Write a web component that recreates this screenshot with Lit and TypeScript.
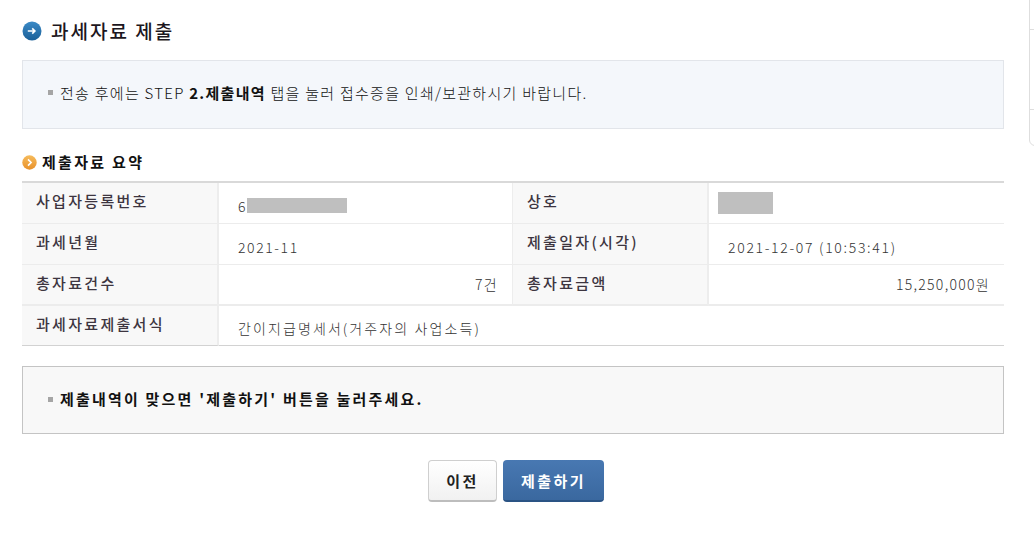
import { LitElement, html, css } from "lit";
import { customElement } from "lit/decorators.js";

@customElement("app-root")
export class AppRoot extends LitElement {
  static styles = css`
    :host {
      display: block;
      position: relative;
      width: 1034px;
      height: 539px;
      overflow: hidden;
      background: #fff;
      font-family: "Noto Sans CJK KR", "Noto Sans", sans-serif;
      color: #333;
      font-size: 15px;
    }
    .page { display: flex; flex-direction: column; padding: 0 30px 0 22px; }
    .title { display: flex; align-items: center; gap: 9px; height: 60px; padding-top: 1px; box-sizing: border-box; }
    .title h1 { margin: 0; font-size: 19px; font-weight: 500; color: #1c1620; letter-spacing: 2px; line-height: 24px; }
    .title svg, .sub svg { flex: none; }
    .box {
      display: flex; align-items: center; gap: 7px;
      box-sizing: border-box; padding: 0 25px;
      letter-spacing: 1.28px; line-height: 20px; color: #111;
    }
    .box .dot { width: 5px; height: 5px; background: #a5a5a5; flex: none; }
    .info { height: 69px; padding-bottom: 4px; background: #f4f7fb; border: 1px solid #e2e5ea; font-weight: 300; }
    .info b, .note { font-weight: 700; color: #111; }
    .note { height: 68px; margin-top: 20px; padding-bottom: 2px; background: #f8f8f8; border: 1px solid #c4c4c4; letter-spacing: 2.2px; }
    .sub { display: flex; align-items: center; gap: 5px; height: 52px; padding-top: 14px; box-sizing: border-box; }
    .sub h2 { margin: 0; font-size: 15px; font-weight: 700; color: #111; letter-spacing: 2.3px; line-height: 20px; }
    .table {
      display: grid;
      grid-template-columns: 197px 293px 197px 295px;
      grid-template-rows: 41px 41px 41px 40px;
      border-top: 2px solid #d9d9d9;
    }
    .cell { box-sizing: border-box; display: flex; align-items: center; border-bottom: 1px solid #ececec; }
    .th {
      background: #f8f8f8; border-right: 2px solid #ededed;
      padding: 0 0 5px 14px; font-weight: 500; color: #3d3540; letter-spacing: 2.3px;
    }
    .th.second { padding-left: 14px; border-left: 1px solid #ededed; }
    .td { padding: 5px 0 0 19px; color: #333; font-size: 14px; font-weight: 300; letter-spacing: 1.6px; }
    .td.date { padding-left: 19px; letter-spacing: 1.7px; }
    .td.form { letter-spacing: 2.1px; }
    .td.num { justify-content: flex-end; padding: 0 14px 2px 0; letter-spacing: 1.3px; }
    .row3 { border-bottom: 2px solid #ececec; }
    .last { border-bottom: 1px solid #d2d2d2; }
    .wide { grid-column: span 3; }
    .mask { display: inline-block; background: #bfbfbf; }
    .m1 { width: 100px; height: 15px; margin: -1px 0 0 0; }
    .m2 { width: 55px; height: 22px; }
    .td.logo { padding: 0 0 0 9px; }
    .actions { display: flex; justify-content: center; gap: 6px; margin-top: 26px; padding-left: 6px; }
    button {
      box-sizing: border-box; height: 42px; border-radius: 4px; padding: 0;
      font: 700 15px "Noto Sans CJK KR", "Noto Sans", sans-serif; letter-spacing: 2.5px;
    }
    .prev {
      width: 69px; background: linear-gradient(#fff, #f1f1f1); color: #222;
      border: 1px solid #cfcfcf; border-bottom: 2px solid #bdbdbd;
    }
    .go {
      width: 101px; background: linear-gradient(#4878b2, #3a689f); color: #fff;
      border: 0; border-bottom: 2px solid #2a5384;
    }
    .side {
      position: absolute; left: 1029px; top: -10px; width: 20px; height: 156px;
      box-sizing: border-box; border: 1px solid #dedede; border-radius: 6px;
    }
    .side i { display: block; position: absolute; left: 0; right: 0; height: 1px; background: #dedede; }
    .side .a { top: 38px; }
    .side .b { top: 118px; }
  `;

  render() {
    return html`
      <div class="page">
        <div class="title">
          <svg width="20" height="20" viewBox="0 0 20 20">
            <defs><linearGradient id="bl" x1="0" y1="0" x2="0" y2="1"><stop offset="0" stop-color="#3b8ac6"/><stop offset="1" stop-color="#1a5f98"/></linearGradient></defs>
            <circle cx="10" cy="10" r="9.5" fill="url(#bl)"/>
            <path d="M5.8 10h7M10.2 7.4 12.9 10l-2.7 2.6" fill="none" stroke="#fff" stroke-width="1.6"/>
          </svg>
          <h1>과세자료 제출</h1>
        </div>
        <div class="box info">
          <span class="dot"></span>
          <span>전송 후에는 STEP <b>2.제출내역</b> 탭을 눌러 접수증을 인쇄/보관하시기 바랍니다.</span>
        </div>
        <div class="sub">
          <svg width="15" height="15" viewBox="0 0 15 15">
            <defs><linearGradient id="or" x1="0" y1="0" x2="0" y2="1"><stop offset="0" stop-color="#f6bb5c"/><stop offset="1" stop-color="#e8912a"/></linearGradient></defs>
            <circle cx="7.5" cy="7.5" r="7.2" fill="url(#or)"/>
            <path d="M6 4.4 9.1 7.5 6 10.6" fill="none" stroke="#fff" stroke-width="1.6"/>
          </svg>
          <h2>제출자료 요약</h2>
        </div>
        <div class="table">
          <div class="cell th">사업자등록번호</div>
          <div class="cell td"><span>6</span><span class="mask m1"></span></div>
          <div class="cell th second">상호</div>
          <div class="cell td logo"><span class="mask m2"></span></div>

          <div class="cell th">과세년월</div>
          <div class="cell td">2021-11</div>
          <div class="cell th second">제출일자(시각)</div>
          <div class="cell td date">2021-12-07 (10:53:41)</div>

          <div class="cell th row3">총자료건수</div>
          <div class="cell td num row3">7건</div>
          <div class="cell th second row3">총자료금액</div>
          <div class="cell td num row3">15,250,000원</div>

          <div class="cell th last">과세자료제출서식</div>
          <div class="cell td form wide last">간이지급명세서(거주자의 사업소득)</div>
        </div>
        <div class="box note">
          <span class="dot"></span>
          <span>제출내역이 맞으면 '제출하기' 버튼을 눌러주세요.</span>
        </div>
        <div class="actions">
          <button class="prev">이전</button>
          <button class="go">제출하기</button>
        </div>
      </div>
      <div class="side"><i class="a"></i><i class="b"></i></div>
    `;
  }
}
